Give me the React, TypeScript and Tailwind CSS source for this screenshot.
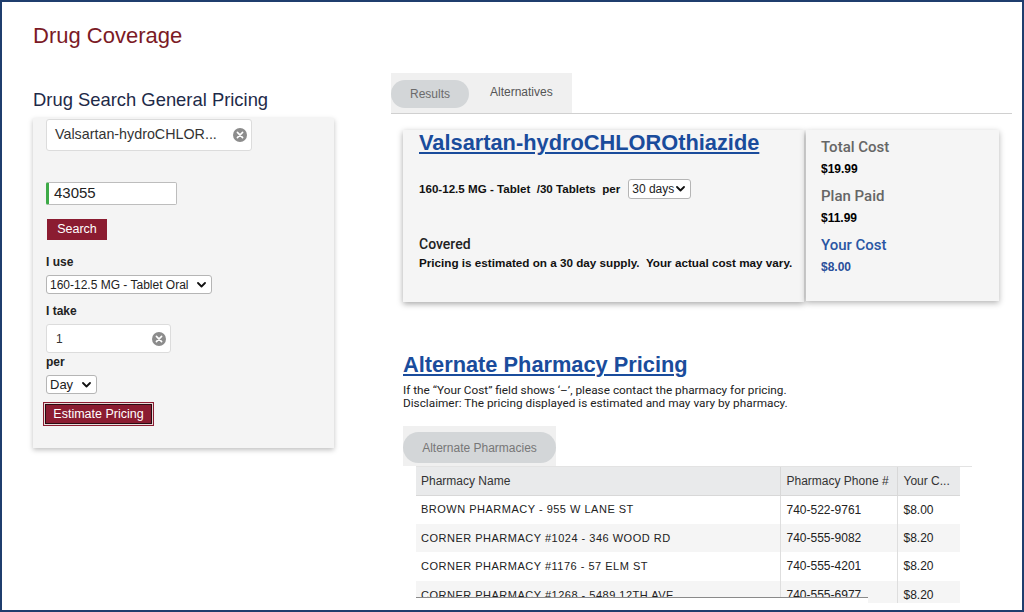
import React from "react";

const maroon = "bg-[#8b1c31]";

function ClearIcon() {
  return (
    <svg width="14" height="14" viewBox="0 0 14 14">
      <circle cx="7" cy="7" r="7" fill="#8c8c8c" />
      <path d="M4.4 4.4l5.2 5.2M9.6 4.4l-5.2 5.2" stroke="#fff" strokeWidth="1.6" strokeLinecap="round" />
    </svg>
  );
}

function Chevron() {
  return (
    <svg width="9" height="6" viewBox="0 0 9 6">
      <path d="M1 1l3.5 3.5L8 1" fill="none" stroke="#111" strokeWidth="1.8" strokeLinecap="round" strokeLinejoin="round" />
    </svg>
  );
}

function FakeSelect({ label, className }: { label: string; className: string }) {
  return (
    <div
      className={`flex items-center justify-between rounded-[3px] border border-[#b5b5b5] bg-white pl-[3px] pr-[5px] text-[12px] text-[#222] ${className}`}
    >
      <span>{label}</span>
      <Chevron />
    </div>
  );
}

function SearchPanel() {
  return (
    <div className="w-[301px] pt-4">
      <h2 className="text-[18.4px] leading-[22px] text-[#1e2a48]">Drug Search General Pricing</h2>
      <div className="mt-[7px] bg-[#f4f4f4] pb-[23px] pl-[13px] pt-px shadow-[0_2px_5px_rgba(0,0,0,0.25)]">
        <div className="flex h-8 w-[206px] items-center justify-between rounded-[3px] border border-[#dcdcdc] bg-white pl-2 pr-[4px] text-[14.3px] text-[#333]">
          <span>Valsartan-hydroCHLOR...</span>
          <ClearIcon />
        </div>

        <div className="mt-[31px] flex h-[23px] w-[131px] items-center rounded-[2px] border border-[#bdbdbd] border-l-[3px] border-l-[#3daa47] bg-white pl-[5px] text-[15px] text-[#222]">
          43055
        </div>

        <button className={`ml-px mt-[14px] h-[21px] w-[60px] ${maroon} text-[12.5px] text-white`}>Search</button>

        <div className="mt-[14px] text-[12px] font-bold leading-4 text-[#222]">I use</div>
        <FakeSelect label="160-12.5 MG - Tablet Oral" className="mt-[5px] h-[19px] w-[166px]" />

        <div className="mt-[9px] text-[12px] font-bold leading-4 text-[#222]">I take</div>
        <div className="mt-[5px] flex h-[29px] w-[125px] items-center justify-between rounded-[3px] border border-[#dcdcdc] bg-white pl-[9px] pr-[4px] text-[12px] text-[#333]">
          <span>1</span>
          <ClearIcon />
        </div>

        <div className="mt-px text-[12px] font-bold leading-4 text-[#222]">per</div>
        <FakeSelect label="Day" className="mt-[5px] h-[19px] w-[51px] text-[13px]" />

        <button
          className={`-ml-px mt-[10px] h-[20px] w-[107px] border border-[#2a0a10] ${maroon} text-[12.5px] text-white shadow-[0_0_0_1px_#e9d9d9,0_0_0_2px_#8b1c31]`}
        >
          Estimate Pricing
        </button>
      </div>
    </div>
  );
}

function CostItem({ label, value, blue }: { label: string; value: string; blue?: boolean }) {
  return (
    <div className="mb-[10px]">
      <div className={`font-['Roboto',sans-serif] text-[15px] font-medium leading-5 ${blue ? "text-[#2a56a3]" : "text-[#666]"}`}>
        {label}
      </div>
      <div className={`mt-[5px] text-[12px] font-bold leading-[14px] ${blue ? "text-[#2a4f9a]" : "text-black"}`}>{value}</div>
    </div>
  );
}

const pharmacies = [
  { name: "BROWN PHARMACY - 955 W LANE ST", phone: "740-522-9761", cost: "$8.00" },
  { name: "CORNER PHARMACY #1024 - 346 WOOD RD", phone: "740-555-9082", cost: "$8.20" },
  { name: "CORNER PHARMACY #1176 - 57 ELM ST", phone: "740-555-4201", cost: "$8.20" },
  { name: "CORNER PHARMACY #1268 - 5489 12TH AVE", phone: "740-555-6977", cost: "$8.20" },
];

function ResultsPanel() {
  return (
    <div className="w-[621px]">
      {/* Tabs */}
      <div className="border-b border-[#d0d0d0]">
        <div className="flex h-10 w-[181px] items-start bg-[#f0f0f0] pt-[7px]">
          <div className="flex h-7 w-[78px] items-center justify-center rounded-full bg-[#d3d6d8] text-[12px] text-[#6b6b6b]">
            Results
          </div>
          <div className="ml-[21px] flex h-6 items-center text-[12px] text-[#555]">Alternatives</div>
        </div>
      </div>

      {/* Result card */}
      <div className="ml-3 mt-4 flex gap-[2px]">
        <div className="h-[172px] w-[401px] bg-[#f5f5f5] pl-4 pt-px shadow-[0_2px_6px_rgba(0,0,0,0.35)]">
          <div className="text-[21.8px] font-bold leading-6 text-[#1a4c9c] underline underline-offset-2">
            Valsartan-hydroCHLOROthiazide
          </div>
          <div className="mt-6 flex h-5 items-center gap-[8px]">
            <span className="whitespace-pre text-[11.6px] font-bold text-[#111]">160-12.5 MG - Tablet  /30 Tablets  per</span>
            <FakeSelect label="30 days" className="h-5 w-[63px] text-[12px]" />
          </div>
          <div className="mt-9 font-['Roboto',sans-serif] text-[14px] font-medium leading-[18px] text-[#222]">Covered</div>
          <div className="mt-[3px] whitespace-pre text-[11.7px] font-bold leading-[14px] text-[#111]">
            Pricing is estimated on a 30 day supply.  Your actual cost may vary.
          </div>
        </div>
        <div className="h-[171px] w-[193px] bg-[#f5f5f5] pl-[15px] pt-[7px] shadow-[0_2px_6px_rgba(0,0,0,0.3)]">
          <CostItem label="Total Cost" value="$19.99" />
          <CostItem label="Plan Paid" value="$11.99" />
          <CostItem label="Your Cost" value="$8.00" blue />
        </div>
      </div>

      {/* Alternate pharmacies */}
      <div className="ml-3 mt-[51px]">
        <div className="text-[21.8px] font-bold leading-6 text-[#1a4c9c] underline underline-offset-2">Alternate Pharmacy Pricing</div>
        <div className="mt-[7px] font-['Roboto',sans-serif] text-[11.8px] leading-[13px] text-[#222]">
          <div>If the “Your Cost” field shows ‘–’, please contact the pharmacy for pricing.</div>
          <div>Disclaimer: The pricing displayed is estimated and may vary by pharmacy.</div>
        </div>
        <div className="mt-4 h-10 w-[153px] bg-[#f0f0f0] pt-[6px]">
          <div className="flex h-[31px] items-center justify-center rounded-full bg-[#d3d6d8] text-[12px] text-[#777]">
            Alternate Pharmacies
          </div>
        </div>
      </div>

      <div className="relative ml-[25px] h-[137px] w-[556px] overflow-hidden border-t border-[#e3e3e3]">
        <table className="w-[544px] table-fixed border-collapse text-[12px] text-[#222]">
          <colgroup>
            <col className="w-[364px]" />
            <col className="w-[117px]" />
            <col className="w-[63px]" />
          </colgroup>
          <thead>
            <tr className="h-7 bg-[#e9eaeb] text-left text-[#333]">
              <th className="border-b border-r border-[#d8d8d8] pl-[5px] font-normal">Pharmacy Name</th>
              <th className="border-b border-r border-[#d8d8d8] pl-[6px] font-normal">Pharmacy Phone #</th>
              <th className="border-b border-[#d8d8d8] pl-[6px] font-normal">Your C...</th>
            </tr>
          </thead>
          <tbody>
            {pharmacies.map((p, i) => (
              <tr key={p.name} className={`h-[28.5px] ${i % 2 === 1 ? "bg-[#f5f5f5]" : "bg-white"}`}>
                <td className="border-r border-[#dedede] pl-[5px] text-[11px] tracking-[0.5px]">{p.name}</td>
                <td className="border-r border-[#dedede] pl-[6px]">{p.phone}</td>
                <td className="pl-[6px]">{p.cost}</td>
              </tr>
            ))}
          </tbody>
        </table>
        {/* horizontal scrollbar */}
        <div className="absolute left-0 top-[130px] h-[7px] w-[452px] border-t border-[#8a8a8a] bg-white" />
      </div>
    </div>
  );
}

export default function App() {
  return (
    <div className="h-[612px] w-[1024px] overflow-hidden border-2 border-[#1f3d6d] bg-white font-['Liberation_Sans',Arial,sans-serif]">
      <div className="pl-[31px] pt-[21px]">
        <h1 className="text-[22px] leading-[26px] text-[#7b1a25]">Drug Coverage</h1>
        <div className="mt-6 flex gap-[57px]">
          <SearchPanel />
          <ResultsPanel />
        </div>
      </div>
    </div>
  );
}
